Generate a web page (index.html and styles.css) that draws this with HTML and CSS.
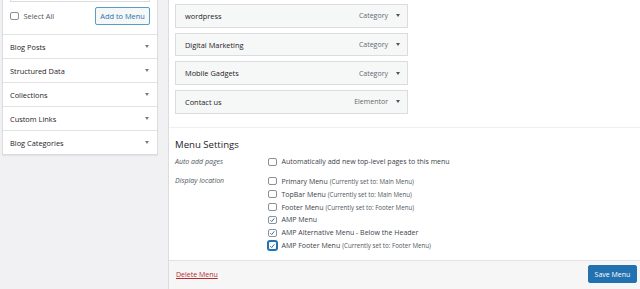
FILE: index.html
```html
<!DOCTYPE html>
<html>
<head>
<meta charset="utf-8">
<link rel="stylesheet" href="styles.css">
</head>
<body>
<div class="page">
  <aside class="side">
    <div class="panel">
      <div class="panel-top">
        <div class="search-box"></div>
        <div class="select-row">
          <label class="sel"><span class="cb"></span><span>Select All</span></label>
          <button class="btn-add">Add to Menu</button>
        </div>
      </div>
      <div class="acc"><span>Blog Posts</span><span class="tri"></span></div>
      <div class="acc"><span>Structured Data</span><span class="tri"></span></div>
      <div class="acc"><span>Collections</span><span class="tri"></span></div>
      <div class="acc"><span>Custom Links</span><span class="tri"></span></div>
      <div class="acc"><span>Blog Categories</span><span class="tri"></span></div>
    </div>
  </aside>
  <main class="main">
    <section class="items">
      <div class="item"><span class="title">wordpress</span><span class="type">Category</span><span class="tri dark"></span></div>
      <div class="item"><span class="title">Digital Marketing</span><span class="type">Category</span><span class="tri dark"></span></div>
      <div class="item"><span class="title">Mobile Gadgets</span><span class="type">Category</span><span class="tri dark"></span></div>
      <div class="item"><span class="title">Contact us</span><span class="type">Elementor</span><span class="tri dark"></span></div>
    </section>
    <section class="settings">
      <h3>Menu Settings</h3>
      <div class="srow">
        <div class="lab">Auto add pages</div>
        <div class="opts">
          <div class="opt"><span class="cb"></span>Automatically add new top-level pages to this menu</div>
        </div>
      </div>
      <div class="srow">
        <div class="lab">Display location</div>
        <div class="opts">
          <div class="opt"><span class="cb"></span>Primary Menu <small>(Currently set to: Main Menu)</small></div>
          <div class="opt"><span class="cb"></span>TopBar Menu <small>(Currently set to: Main Menu)</small></div>
          <div class="opt"><span class="cb"></span>Footer Menu <small>(Currently set to: Footer Menu)</small></div>
          <div class="opt"><span class="cb on"><svg viewBox="0 0 10 10"><path d="M2 5.2 L4.2 7.4 L8.2 2.4" /></svg></span>AMP Menu</div>
          <div class="opt"><span class="cb on"><svg viewBox="0 0 10 10"><path d="M2 5.2 L4.2 7.4 L8.2 2.4" /></svg></span>AMP Alternative Menu - Below the Header</div>
          <div class="opt"><span class="cb on focus"><svg viewBox="0 0 10 10"><path d="M2 5.2 L4.2 7.4 L8.2 2.4" /></svg></span>AMP Footer Menu <small>(Currently set to: Footer Menu)</small></div>
        </div>
      </div>
    </section>
    <footer class="foot">
      <a class="del" href="#">Delete Menu</a>
      <button class="btn-save">Save Menu</button>
    </footer>
  </main>
</div>
</body>
</html>
```
FILE: styles.css
```css
* { box-sizing: border-box; }
html, body { margin: 0; padding: 0; }
body {
  background: #f1f0f2;
  font-family: "Open Sans", "Noto Sans", sans-serif;
  color: #3c434a;
  font-size: 7.4px;
  width: 640px;
  height: 289px;
  overflow: hidden;
}
.page { display: flex; height: 289px; }
.side { width: 168px; flex: none; padding-left: 2px; padding-right: 10px; }
.panel {
  background: #fff;
  border: 1px solid #dcdcde;
  border-top: none;
  box-shadow: 0 1px 1px rgba(0,0,0,.06);
}
.panel-top { padding: 0 7px 0 7px; height: 34px; }
.search-box {
  height: 2px;
  border: 1px solid #dcdcde;
  border-top: none;
}
.select-row { display: flex; justify-content: space-between; align-items: center; margin-top: 5px; }
.sel { display: flex; align-items: center; color: #50575e; }
.sel .cb { margin-right: 5px; }
.btn-add {
  font: inherit;
  font-size: 7.4px;
  color: #2271b1;
  background: #f6f7f7;
  border: 1px solid #5a9dc4;
  border-radius: 2px;
  height: 18px;
  width: 55px;
  padding: 0;
}
.acc {
  height: 24px;
  border-top: 1px solid #e2e2e4;
  display: flex;
  align-items: center;
  justify-content: space-between;
  padding: 0 8px 0 7px;
  color: #1d2327;
}
.tri {
  width: 0; height: 0;
  border-left: 2px solid transparent;
  border-right: 2px solid transparent;
  border-top: 3px solid #787c82;
}
.tri.dark { border-top-color: #50575e; border-left-width: 2.5px; border-right-width: 2.5px; border-top-width: 3.5px; }
.main {
  flex: 1;
  background: #fff;
  border-left: 1px solid #dcdcde;
  display: flex;
  flex-direction: column;
}
.items {
  padding: 4px 0 0 6px;
  height: 128px;
  border-bottom: 1px solid #f0f0f1;
  display: flex;
  flex-direction: column;
  gap: 5px;
}
.item {
  width: 233px;
  height: 23.7px;
  flex: none;
  background: #f6f7f7;
  border: 1px solid #dcdcde;
  display: flex;
  align-items: center;
  padding: 0 7px 0 9px;
  color: #1d2327;
}
.item .title { flex: 1; }
.item .type { color: #646970; margin-right: 8px; font-size: 7px; }
.settings { padding: 11px 0 0 6px; }
.settings h3 {
  font-size: 9.6px;
  font-weight: 400;
  margin: 0 0 4.5px;
  color: #1d2327;
  line-height: 12px;
}
.srow { display: flex; margin-bottom: 6.4px; font-size: 7px; }
.lab { width: 93px; font-style: italic; color: #50575e; line-height: 12.9px; }
.opts { display: flex; flex-direction: column; }
.opt { display: flex; align-items: center; height: 12.9px; white-space: nowrap; }
.opt small { font-size: 6.2px; color: #50575e; margin-left: 2px; }
.cb {
  width: 8.5px; height: 8.5px;
  border: 1px solid #8c8f94;
  border-radius: 2px;
  background: #fff;
  display: inline-flex;
  align-items: center;
  justify-content: center;
  margin-right: 5px;
  flex: none;
}
.cb svg { width: 8px; height: 8px; }
.cb svg path { fill: none; stroke: #2271b1; stroke-width: 1.5; }
.cb.focus { border-color: #2271b1; box-shadow: 0 0 0 1px #2271b1; }
.foot {
  margin-top: auto;
  height: 29px;
  background: #f6f6f7;
  border-top: 1px solid #e2e2e4;
  display: flex;
  align-items: center;
  justify-content: space-between;
  padding: 0 3px 0 7px;
  font-size: 7px;
}
.del { color: #b32d2e; text-decoration: underline; margin-bottom: 2px; }
.btn-save {
  font: inherit;
  font-size: 7px;
  background: #2271b1;
  color: #fff;
  border: 1px solid #2271b1;
  border-radius: 2px;
  height: 18px;
  width: 49px;
  padding: 0;
  margin-bottom: 2px;
}
```
